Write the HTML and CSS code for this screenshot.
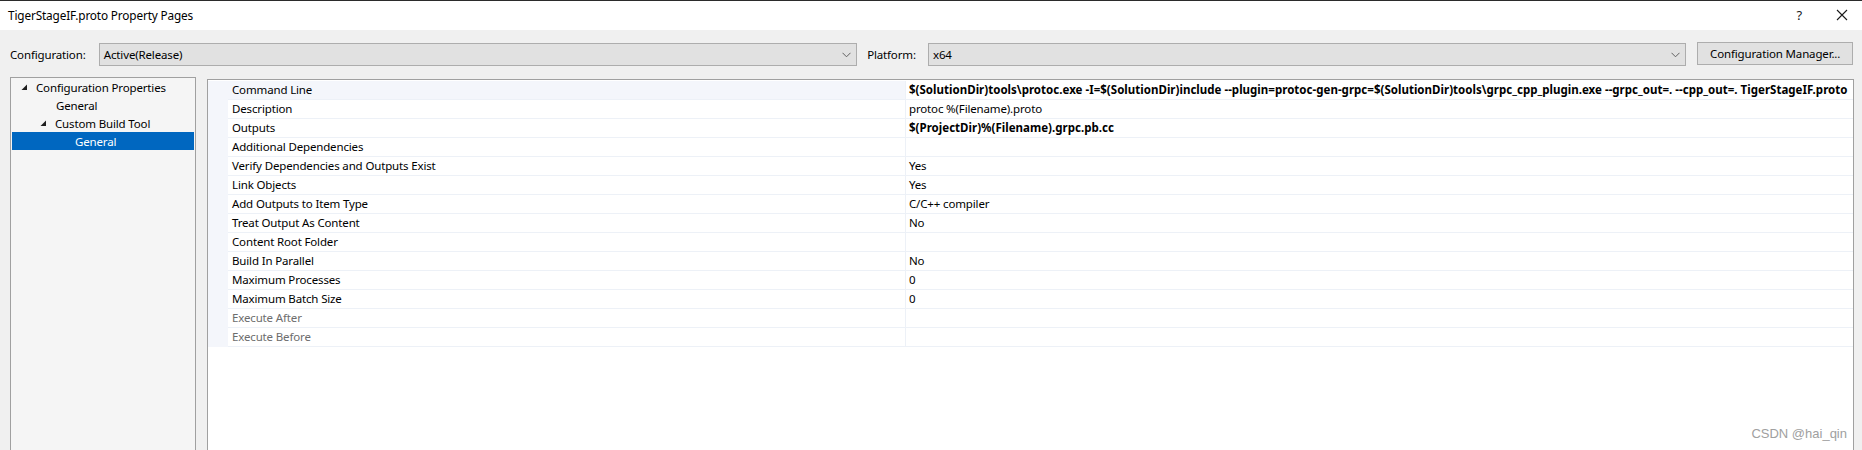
FILE: index.html
```html
<!DOCTYPE html>
<html>
<head>
<meta charset="utf-8">
<link rel="stylesheet" href="styles.css">
</head>
<body>
<div class="window">
  <div class="titlebar">
    <div class="title">TigerStageIF.proto Property Pages</div>
    <div class="title-actions">
      <span class="help">?</span>
      <svg class="close" width="12" height="12" viewBox="0 0 12 12"><path d="M1 1 L11 11 M11 1 L1 11" stroke="#1a1a1a" stroke-width="1.1" fill="none"/></svg>
    </div>
  </div>
  <div class="toolbar">
    <span class="label label-config">Configuration:</span>
    <div class="combo">
      <span class="combo-text">Active(Release)</span>
      <svg class="chev" width="9" height="6" viewBox="0 0 9 6"><path d="M0.5 0.8 L4.5 4.8 L8.5 0.8" stroke="#606060" stroke-width="1" fill="none"/></svg>
    </div>
    <span class="label label-platform">Platform:</span>
    <div class="combo">
      <span class="combo-text">x64</span>
      <svg class="chev" width="9" height="6" viewBox="0 0 9 6"><path d="M0.5 0.8 L4.5 4.8 L8.5 0.8" stroke="#606060" stroke-width="1" fill="none"/></svg>
    </div>
    <div class="button">Configuration Manager...</div>
  </div>
  <div class="main">
    <div class="tree">
      <div class="node lvl0"><svg class="tri" width="7" height="7" viewBox="0 0 7 7"><polygon points="6,0.5 6,6 0.5,6" fill="#1e1e1e"/></svg><span>Configuration Properties</span></div>
      <div class="node lvl1 leaf"><span>General</span></div>
      <div class="node lvl1"><svg class="tri" width="7" height="7" viewBox="0 0 7 7"><polygon points="6,0.5 6,6 0.5,6" fill="#1e1e1e"/></svg><span>Custom Build Tool</span></div>
      <div class="node lvl2 leaf selected"><span>General</span></div>
    </div>
    <div class="grid">
      <div class="row first"><div class="gutter"></div><div class="name">Command Line</div><div class="value bold">$(SolutionDir)tools\protoc.exe -I=$(SolutionDir)include --plugin=protoc-gen-grpc=$(SolutionDir)tools\grpc_cpp_plugin.exe --grpc_out=. --cpp_out=. TigerStageIF.proto</div></div>
      <div class="row"><div class="gutter"></div><div class="name">Description</div><div class="value">protoc %(Filename).proto</div></div>
      <div class="row"><div class="gutter"></div><div class="name">Outputs</div><div class="value bold">$(ProjectDir)%(Filename).grpc.pb.cc</div></div>
      <div class="row"><div class="gutter"></div><div class="name">Additional Dependencies</div><div class="value"></div></div>
      <div class="row"><div class="gutter"></div><div class="name">Verify Dependencies and Outputs Exist</div><div class="value">Yes</div></div>
      <div class="row"><div class="gutter"></div><div class="name">Link Objects</div><div class="value">Yes</div></div>
      <div class="row"><div class="gutter"></div><div class="name">Add Outputs to Item Type</div><div class="value">C/C++ compiler</div></div>
      <div class="row"><div class="gutter"></div><div class="name">Treat Output As Content</div><div class="value">No</div></div>
      <div class="row"><div class="gutter"></div><div class="name">Content Root Folder</div><div class="value"></div></div>
      <div class="row"><div class="gutter"></div><div class="name">Build In Parallel</div><div class="value">No</div></div>
      <div class="row"><div class="gutter"></div><div class="name">Maximum Processes</div><div class="value">0</div></div>
      <div class="row"><div class="gutter"></div><div class="name">Maximum Batch Size</div><div class="value">0</div></div>
      <div class="row"><div class="gutter"></div><div class="name disabled">Execute After</div><div class="value"></div></div>
      <div class="row"><div class="gutter"></div><div class="name disabled">Execute Before</div><div class="value"></div></div>
    </div>
  </div>
  <div class="watermark">CSDN @hai_qin</div>
</div>
</body>
</html>
```
FILE: styles.css
```css
html, body {
  margin: 0;
  padding: 0;
}
body {
  width: 1862px;
  height: 450px;
  overflow: hidden;
  background: #f0f0f0;
  font-family: "Noto Sans", "Open Sans", sans-serif;
  font-size: 11.5px;
  letter-spacing: -0.15px;
  color: #000;
}
.window {
  position: relative;
  width: 1862px;
  height: 450px;
  display: flex;
  flex-direction: column;
}
.titlebar {
  height: 29px;
  background: #fff;
  border-top: 1px solid #2b2b2b;
  display: flex;
  align-items: center;
  justify-content: space-between;
  flex: none;
}
.title {
  padding-left: 8px;
  font-size: 11.8px;
  margin-top: -2px;
}
.title-actions {
  display: flex;
  align-items: center;
  gap: 34px;
  padding-right: 14px;
  margin-top: -2px;
}
.help {
  font-size: 13px;
  color: #1a1a1a;
}
.toolbar {
  flex: none;
  display: flex;
  align-items: center;
  padding: 13px 9px 11px 10px;
  height: 23px;
}
.label {
  white-space: nowrap;
}
.label-config {
  width: 89px;
}
.label-platform {
  width: 61px;
  margin-left: 10px;
}
.combo {
  height: 21px;
  background: #e1e1e1;
  border: 1px solid #adadad;
  display: flex;
  align-items: center;
  justify-content: space-between;
  padding: 0 5px 0 4px;
  box-sizing: content-box;
  width: 749px;
}
.combo-text {
  margin-top: -1px;
}
.button {
  margin-left: 11px;
  width: 154px;
  height: 21px;
  border: 1px solid #adadad;
  background: #e1e1e1;
  display: flex;
  align-items: center;
  justify-content: center;
  margin-top: -2px;
}
.main {
  flex: 1;
  display: flex;
  align-items: flex-start;
  padding-left: 10px;
  gap: 11px;
}
.tree {
  width: 184px;
  height: 400px;
  border: 1px solid #a0a0a0;
  background: #f5f5f5;
  padding-top: 0;
  box-sizing: content-box;
}
.node {
  height: 18px;
  display: flex;
  align-items: center;
  margin: 0 1px;
  white-space: nowrap;
}
.node .tri {
  width: 7px;
  margin-right: 8px;
  margin-top: 1px;
}
.lvl0 { padding-left: 9px; }
.lvl1 { padding-left: 28px; }
.lvl1.leaf { padding-left: 44px; }
.lvl2.leaf { padding-left: 63px; }
.node.selected {
  background: #0067c0;
  color: #fff;
}
.grid {
  margin-top: 2px;
  width: 1645px;
  height: 400px;
  border: 1px solid #a0a0a0;
  background: #fff;
  padding-top: 1px;
  box-sizing: content-box;
}
.row {
  display: flex;
  height: 19px;
}
.gutter {
  width: 20px;
  flex: none;
  background: #f4f6fb;
}
.name {
  width: 678px;
  flex: none;
  padding-left: 4px;
  box-sizing: border-box;
  border-bottom: 1px solid #edf1f7;
  border-right: 1px solid #edf1f7;
  line-height: 18px;
  white-space: nowrap;
}
.row.first .name {
  background: #f4f6fb;
}
.value {
  flex: 1;
  padding-left: 3px;
  border-bottom: 1px solid #edf1f7;
  line-height: 18px;
  white-space: nowrap;
  overflow: hidden;
}
.bold {
  font-weight: bold;
  letter-spacing: 0.02px;
}
.disabled {
  color: #6d6d6d;
}
.watermark {
  position: absolute;
  right: 15px;
  bottom: 9px;
  font-family: "Liberation Sans", Arial, sans-serif;
  font-size: 13px;
  letter-spacing: 0;
  color: #a0a0a0;
}
```
